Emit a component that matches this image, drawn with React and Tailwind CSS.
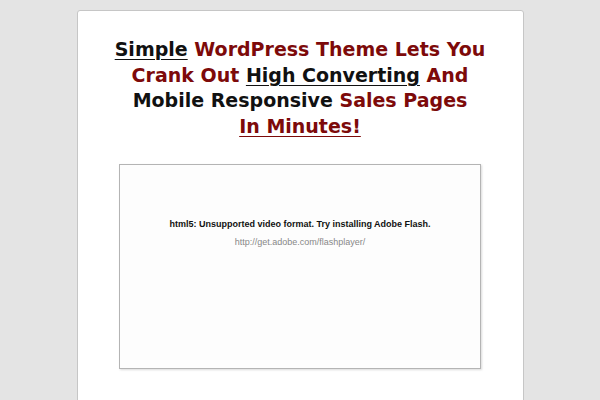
import React from 'react';

const Red = ({ children, u }) => (
    <span className={`text-[#7d0a0a] ${u ? 'underline underline-offset-[3px] decoration-1' : ''}`}>{children}</span>
);

const Black = ({ children, u }) => (
    <span className={`text-[#111] ${u ? 'underline underline-offset-[3px] decoration-1' : ''}`}>{children}</span>
);

const App = () => {
    return (
        <div className="h-[400px] bg-[#e4e4e4] pt-[10px] overflow-hidden">
            <div className="mx-auto w-[447px] h-[400px] bg-white border border-[#c6c6c6] rounded-[3px]">
                <h1
                    className="pt-[26px] text-center text-[19px] leading-[25.5px] font-bold"
                    style={{ fontFamily: '"DejaVu Sans", sans-serif' }}
                >
                    <Black u>Simple</Black> <Red>WordPress Theme Lets You</Red>
                    <br />
                    <Red>Crank Out</Red> <Black u>High Converting</Black> <Red>And</Red>
                    <br />
                    <Black>Mobile Responsive</Black> <Red>Sales Pages</Red>
                    <br />
                    <Red u>In Minutes!</Red>
                </h1>
                <div className="mt-[25px] mx-auto w-[362px] h-[205px] bg-[#fdfdfd] border border-[#b4b4b4] shadow-[1px_1px_2px_rgba(0,0,0,0.15)] flex flex-col items-center pt-[53px]"
                    style={{ fontFamily: '"Liberation Sans", Arial, sans-serif' }}
                >
                    <p className="text-[9px] leading-[12px] font-bold text-[#111]">
                        html5: Unsupported video format. Try installing Adobe Flash.
                    </p>
                    <p className="mt-[6px] text-[9px] leading-[12px] text-[#888]">http://get.adobe.com/flashplayer/</p>
                </div>
            </div>
        </div>
    );
};

export default App;
